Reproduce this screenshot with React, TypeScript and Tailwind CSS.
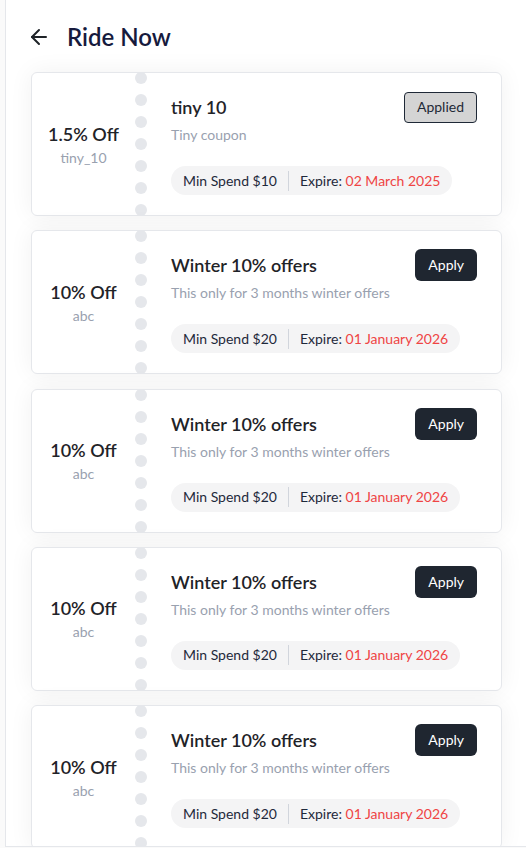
import { ArrowLeft } from 'lucide-react'

type Coupon = {
  id: number
  discount: string
  code: string
  title: string
  description: string
  minSpend: string
  expire: string
  applied?: boolean
}

const coupons: Coupon[] = [
  {
    id: 1,
    discount: '1.5% Off',
    code: 'tiny_10',
    title: 'tiny 10',
    description: 'Tiny coupon',
    minSpend: '$10',
    expire: '02 March 2025',
    applied: true,
  },
  ...[2, 3, 4, 5].map((id) => ({
    id,
    discount: '10% Off',
    code: 'abc',
    title: 'Winter 10% offers',
    description: 'This only for 3 months winter offers',
    minSpend: '$20',
    expire: '01 January 2026',
  })),
]

const CouponCard = ({ coupon }: { coupon: Coupon }) => (
  <div className="flex h-[144px] shrink-0 overflow-hidden rounded-md border border-gray-200 bg-white shadow-[0_0_24px_rgba(0,0,0,0.06)]">
    {/* Discount */}
    <div className="flex w-[103px] shrink-0 flex-col items-center justify-center pb-[1px]">
      <span className="text-lg leading-7 font-semibold text-[#1f2328]">{coupon.discount}</span>
      <span className="text-sm leading-5 text-gray-400">{coupon.code}</span>
    </div>

    {/* Perforation */}
    <div className="-mt-px flex w-3 shrink-0 flex-col gap-[10px]">
      {Array.from({ length: 7 }).map((_, i) => (
        <span key={i} className="h-3 w-3 shrink-0 rounded-full bg-gray-200" />
      ))}
    </div>

    {/* Details */}
    <div className="flex flex-1 flex-col pt-[18px] pr-6 pl-6">
      <div className="flex h-8 items-center justify-between">
        <span className="text-lg font-semibold text-[#1f2328]">{coupon.title}</span>
        {coupon.applied ? (
          <button className="h-[31px] rounded border border-[#1f2937] bg-[#d4d4d4] px-[12px] text-sm text-[#1f2937]">
            Applied
          </button>
        ) : (
          <button className="h-8 rounded-md bg-[#1f2630] px-[13px] text-sm text-white">Apply</button>
        )}
      </div>
      <p className="mt-[2px] text-sm leading-5 text-gray-400">{coupon.description}</p>
      <div className="mt-[21px] flex h-[29px] items-center self-start rounded-full bg-[#f4f4f5] px-3 text-sm text-[#1e293b]">
        <span>Min Spend {coupon.minSpend}</span>
        <span className="mx-[11px] h-5 w-px bg-gray-300" />
        <span>
          Expire: <span className="text-[#ef4444]">{coupon.expire}</span>
        </span>
      </div>
    </div>
  </div>
)

export default function App() {
  return (
    <div className="min-h-[848px] bg-[#fafafa] font-['Lato',sans-serif]">
      <div className="ml-[5px] h-[847px] overflow-hidden border-b border-l border-gray-200 bg-white pt-4 pr-6 pl-[25px]">
        {/* Header */}
        <div className="flex h-[42px] items-center">
          <button className="-ml-1 text-[#1f2328]" aria-label="Back">
            <ArrowLeft size={24} strokeWidth={2} />
          </button>
          <h1 className="ml-4 text-2xl font-semibold text-[#161a3d]">Ride Now</h1>
        </div>

        {/* Coupons */}
        <div className="mt-[14px] flex flex-col gap-[14.25px]">
          {coupons.map((coupon) => (
            <CouponCard key={coupon.id} coupon={coupon} />
          ))}
        </div>
      </div>
    </div>
  )
}
